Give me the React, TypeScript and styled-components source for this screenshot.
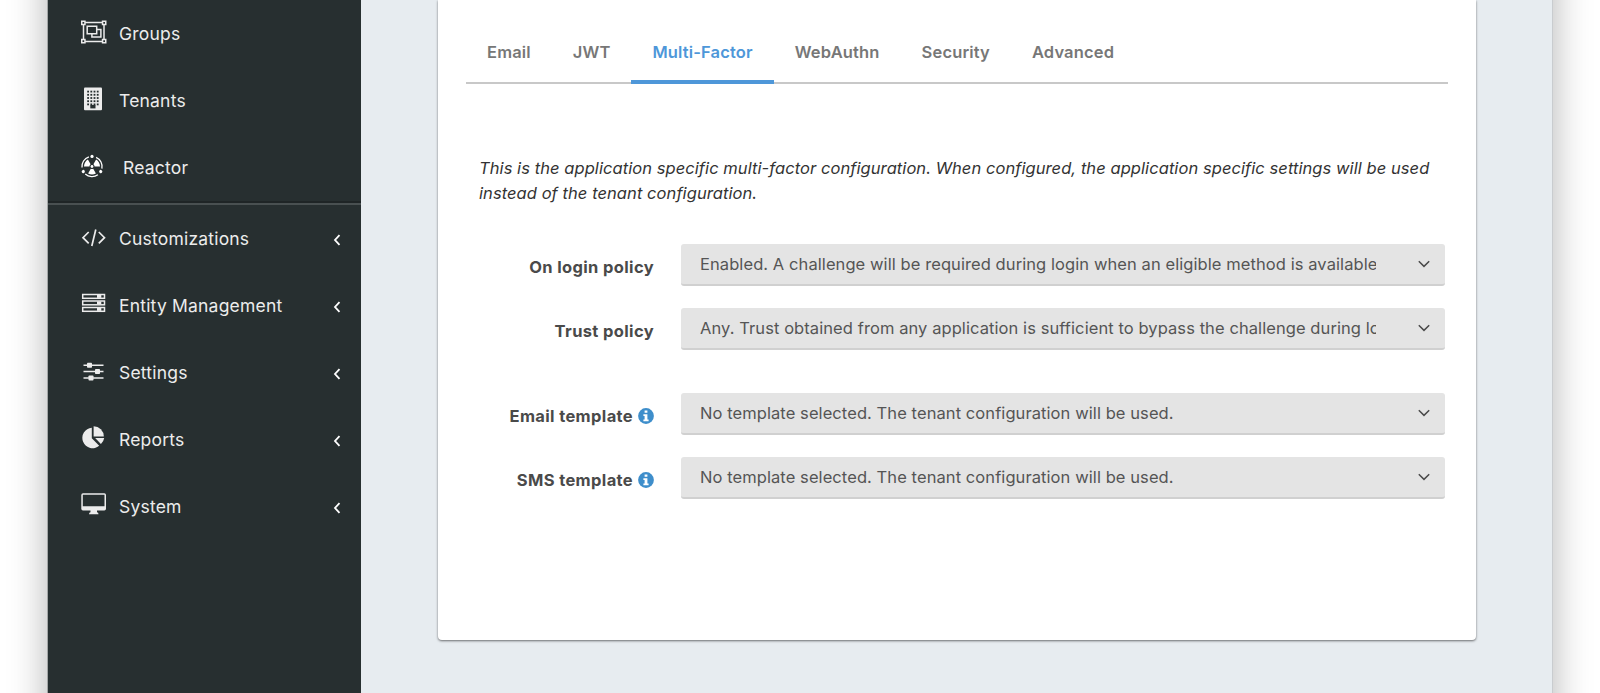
import React from 'react';
import styled, { createGlobalStyle } from 'styled-components';

const GlobalStyle = createGlobalStyle`
  * { box-sizing: border-box; }
  body {
    margin: 0;
    background: #fff;
    font-family: Inter, "Liberation Sans", sans-serif;
    overflow: hidden;
  }
`;

const Stage = styled.div`
  height: 693px;
  padding: 0 47px 0 47px;
  overflow: hidden;
`;

const Window = styled.div`
  display: flex;
  height: 813px;
  margin-top: -60px;
  padding-top: 60px;
  border-left: 1px solid #a3a6a6;
  border-right: 1px solid #c9cccf;
  background: #e7ecf0;
  box-shadow: 0 0 36px rgba(0, 0, 0, 0.3);
`;

const Sidebar = styled.nav`
  width: 313px;
  flex: none;
  background: #272f30;
`;

const NavItem = styled.div`
  display: flex;
  align-items: center;
  height: 67px;
  padding: 0 20.5px 0 32px;
  color: #ececec;
`;

const NavIcon = styled.span<{ $lowered?: boolean }>`
  width: 28px;
  height: 28px;
  margin: ${(p) => (p.$lowered ? 0 : -2)}px 11px 0 0;
  flex: none;

  svg { display: block; }
`;

const NavLabel = styled.span<{ $indent?: boolean }>`
  flex: 1;
  padding: 1px 0 0 ${(p) => (p.$indent ? 4 : 0)}px;
  font-size: 17.5px;
  line-height: 24px;
  letter-spacing: 0.2px;
`;

const NavCaret = styled.svg`
  display: block;
  margin-top: 3px;
`;

const Divider = styled.div`
  height: 4px;
  border-top: 2px solid #1f2526;
  border-bottom: 2px solid #495051;
`;

const Main = styled.main`
  flex: 1;
  padding: 0 76px 0 77px;
`;

const Card = styled.section`
  height: 640px;
  padding: 22px 28px 0;
  background: #fff;
  border-radius: 0 0 4px 4px;
  box-shadow: 0 1px 3px rgba(0, 0, 0, 0.25), 0 1px 2px rgba(0, 0, 0, 0.35);
`;

const Tabs = styled.div`
  display: flex;
  height: 62px;
  border-bottom: 2px solid #c8c8c8;
`;

const Tab = styled.div<{ $active?: boolean }>`
  height: 62px;
  padding: 18px 21px 0;
  border-bottom: 4px solid ${(p) => (p.$active ? '#4e97d9' : 'transparent')};
  color: ${(p) => (p.$active ? '#4e97d9' : '#777')};
  font-size: 16.5px;
  font-weight: 600;
  line-height: 24px;
  letter-spacing: 0.15px;
  white-space: nowrap;
`;

const Intro = styled.p`
  margin: 72px 0 0 13px;
  color: #333;
  font-size: 16.5px;
  font-style: italic;
  line-height: 25px;
  letter-spacing: 0.07px;
  white-space: nowrap;
`;

const Form = styled.div`
  display: flex;
  flex-direction: column;
  gap: 22px;
  margin: 38px 3px 0 0;
`;

const Field = styled.div<{ $spaced?: boolean }>`
  display: flex;
  height: 42px;
  margin-top: ${(p) => (p.$spaced ? 21 : 0)}px;
`;

const Label = styled.label`
  display: flex;
  align-items: center;
  justify-content: flex-end;
  gap: 5px;
  width: 188px;
  margin-right: 27px;
  padding-top: 4px;
  color: #4a4a4a;
  font-size: 16.5px;
  font-weight: 700;
  letter-spacing: 0.36px;
  white-space: nowrap;
`;

const Select = styled.div`
  display: flex;
  flex: 1;
  min-width: 0;
  align-items: center;
  padding: 0 15px 0 19px;
  border-bottom: 2px solid #d0d0d0;
  border-radius: 3px;
  background: #e4e4e4;
  color: #555;
`;

const Value = styled.span`
  width: 676px;
  overflow: hidden;
  font-size: 16.5px;
  line-height: 24px;
  letter-spacing: 0.08px;
  white-space: nowrap;
`;

const Chevron = styled.svg`
  display: block;
  margin-left: auto;
`;

const GroupsIcon = () => (
  <svg width="28" height="28" viewBox="0 0 28 28" fill="none" stroke="currentColor" strokeWidth="1.5">
    <path d="M3.5 5v15.500M24 5v15.500M5 3.500h17.500M5 22.500h17.500" />
    <path d="M1.750 2.250h3.200v3.200h-3.200zM22.550 2.250h3.200v3.200h-3.200zM1.750 20.550h3.200v3.200h-3.200zM22.550 20.550h3.200v3.200h-3.200z" />
    <path d="M7.200 7.200h9.500v7.500H7.200zM16.700 10.500h4.200v7.500h-9v-3.300" />
  </svg>
);

const TenantsIcon = () => (
  <svg width="28" height="28" viewBox="0 0 28 28">
    <rect x="4" y="1.500" width="18" height="22.800" rx="1" fill="currentColor" />
    <g fill="#272f30">
      {[4.7, 7.9, 11.1, 14.3, 17.5].map((y) =>
        [7.2, 10.4, 13.6, 16.8].map((x) => <rect key={`${x}-${y}`} x={x} y={y} width="1.800" height="1.800" />),
      )}
      <rect x="10.300" y="19" width="5.200" height="3.400" />
    </g>
  </svg>
);

const ReactorIcon = () => (
  <svg width="28" height="28" viewBox="-12 -13.500 28 28">
    <g fill="none" stroke="#fff" strokeWidth="1.300">
      {[0, 120, 240].map((a) => (
        <path key={a} transform={`rotate(${a})`} d="M4.100 -9.200A10.100 10.100 0 0 1 9.900 2.100" />
      ))}
    </g>
    <g fill="#fff">
      {[0, 120, 240].map((a) => (
        <g key={a} transform={`rotate(${a})`}>
          <circle cx="0" cy="-10.100" r="1.600" />
          <path d="M-1.200 2.300L-3.900 7Q0 9 3.900 7L1.200 2.300Q0 2.900 -1.200 2.300Z" />
        </g>
      ))}
      <circle r="1.400" />
    </g>
  </svg>
);

const CodeIcon = () => (
  <svg width="28" height="28" viewBox="0 0 28 28" fill="none" stroke="currentColor" strokeWidth="1.700">
    <path d="M8.700 7L3 12.700l5.700 5.700M18.800 7l5.700 5.700-5.700 5.700M15.800 4.500l-4 16.500" />
  </svg>
);

const ServerIcon = () => (
  <svg width="28" height="28" viewBox="0 0 28 28">
    {[1.7, 8.2, 14.7].map((y) => (
      <g key={y}>
        <rect x="2.700" y={y + 0.8} width="21.800" height="3.800" fill="none" stroke="currentColor" strokeWidth="1.500" />
        <rect x="17" y={y + 1.2} width="4.300" height="3" fill="currentColor" />
      </g>
    ))}
  </svg>
);

const SlidersIcon = () => (
  <svg width="28" height="28" viewBox="0 0 28 28" fill="currentColor">
    <path d="M3.500 5.400h20v1.500h-20zM3.500 11.700h20v1.500h-20zM3.500 18.200h20v1.500h-20z" />
    <rect x="7" y="3.700" width="5" height="5" rx=".8" />
    <rect x="15" y="10" width="5" height="5" rx=".8" />
    <rect x="8.500" y="16.500" width="5" height="5" rx=".8" />
  </svg>
);

const PieIcon = () => (
  <svg width="28" height="28" viewBox="0 0 28 28" fill="currentColor">
    <path d="M11.800 1.800V12.300L19.200 19.700A10.200 10.200 0 1 1 11.800 1.800Z" />
    <path d="M13.600 0.300A10.200 10.200 0 0 1 23.800 10.500H13.600Z" />
    <path d="M15.200 12H24.200A9.600 9.600 0 0 1 20.900 17.900Z" />
  </svg>
);

const DesktopIcon = () => (
  <svg width="28" height="28" viewBox="0 0 28 28">
    <path
      fill="currentColor"
      fillRule="evenodd"
      d="M3 .2h21.300a1.700 1.700 0 0 1 1.700 1.700v13.900a1.700 1.700 0 0 1-1.700 1.700H17v1.700q1.500.2 1.500 2H9q0-1.800 1.500-2v-1.700H3a1.700 1.700 0 0 1-1.700-1.700V1.900A1.700 1.700 0 0 1 3 .2zM2.800 1.700v11.500h21.700V1.700z"
    />
  </svg>
);

const InfoIcon = () => (
  <svg width="16" height="16" viewBox="0 0 16 16">
    <circle cx="8" cy="8" r="7.900" fill="#3e8ecb" />
    <path fill="#fff" d="M6.600 2.600h2.800v2.200H6.600zM5.400 6.200h4v5.200h1.200v1.800H5.400v-1.800h1.200V8H5.400z" />
  </svg>
);

type NavEntry = { label: string; icon: React.ReactNode; indent?: boolean };

const primaryNav: NavEntry[] = [
  { label: 'Groups', icon: <GroupsIcon /> },
  { label: 'Tenants', icon: <TenantsIcon /> },
  { label: 'Reactor', icon: <ReactorIcon />, indent: true },
];

const sectionNav: NavEntry[] = [
  { label: 'Customizations', icon: <CodeIcon /> },
  { label: 'Entity Management', icon: <ServerIcon /> },
  { label: 'Settings', icon: <SlidersIcon /> },
  { label: 'Reports', icon: <PieIcon /> },
  { label: 'System', icon: <DesktopIcon /> },
];

const tabs = ['Email', 'JWT', 'Multi-Factor', 'WebAuthn', 'Security', 'Advanced'];

const fields = [
  { label: 'On login policy', value: 'Enabled. A challenge will be required during login when an eligible method is available' },
  { label: 'Trust policy', value: 'Any. Trust obtained from any application is sufficient to bypass the challenge during login' },
  { label: 'Email template', value: 'No template selected. The tenant configuration will be used.', info: true, spaced: true },
  { label: 'SMS template', value: 'No template selected. The tenant configuration will be used.', info: true },
];

export default function App() {
  return (
    <>
      <GlobalStyle />
      <Stage>
        <Window>
          <Sidebar>
            {primaryNav.map((item) => (
              <NavItem key={item.label}>
                <NavIcon>{item.icon}</NavIcon>
                <NavLabel $indent={item.indent}>{item.label}</NavLabel>
              </NavItem>
            ))}
            <Divider />
            {sectionNav.map((item) => (
              <NavItem key={item.label}>
                <NavIcon $lowered>{item.icon}</NavIcon>
                <NavLabel>{item.label}</NavLabel>
                <NavCaret width="8" height="12" viewBox="0 0 8 12" fill="none" stroke="#fff" strokeWidth="1.800">
                  <path d="M6.500 1.200L2 6l4.500 4.800" />
                </NavCaret>
              </NavItem>
            ))}
          </Sidebar>
          <Main>
            <Card>
              <Tabs>
                {tabs.map((tab) => (
                  <Tab key={tab} $active={tab === 'Multi-Factor'}>{tab}</Tab>
                ))}
              </Tabs>
              <Intro>
                This is the application specific multi-factor configuration. When configured, the application specific settings will be used
                <br />
                instead of the tenant configuration.
              </Intro>
              <Form>
                {fields.map((field) => (
                  <Field key={field.label} $spaced={field.spaced}>
                    <Label>
                      {field.label}
                      {field.info && <InfoIcon />}
                    </Label>
                    <Select>
                      <Value>{field.value}</Value>
                      <Chevron width="12" height="8" viewBox="0 0 12 8" fill="none" stroke="#4a4a4a" strokeWidth="1.500">
                        <path d="M.8 1.200L6 6.400l5.200-5.200" />
                      </Chevron>
                    </Select>
                  </Field>
                ))}
              </Form>
            </Card>
          </Main>
        </Window>
      </Stage>
    </>
  );
}
